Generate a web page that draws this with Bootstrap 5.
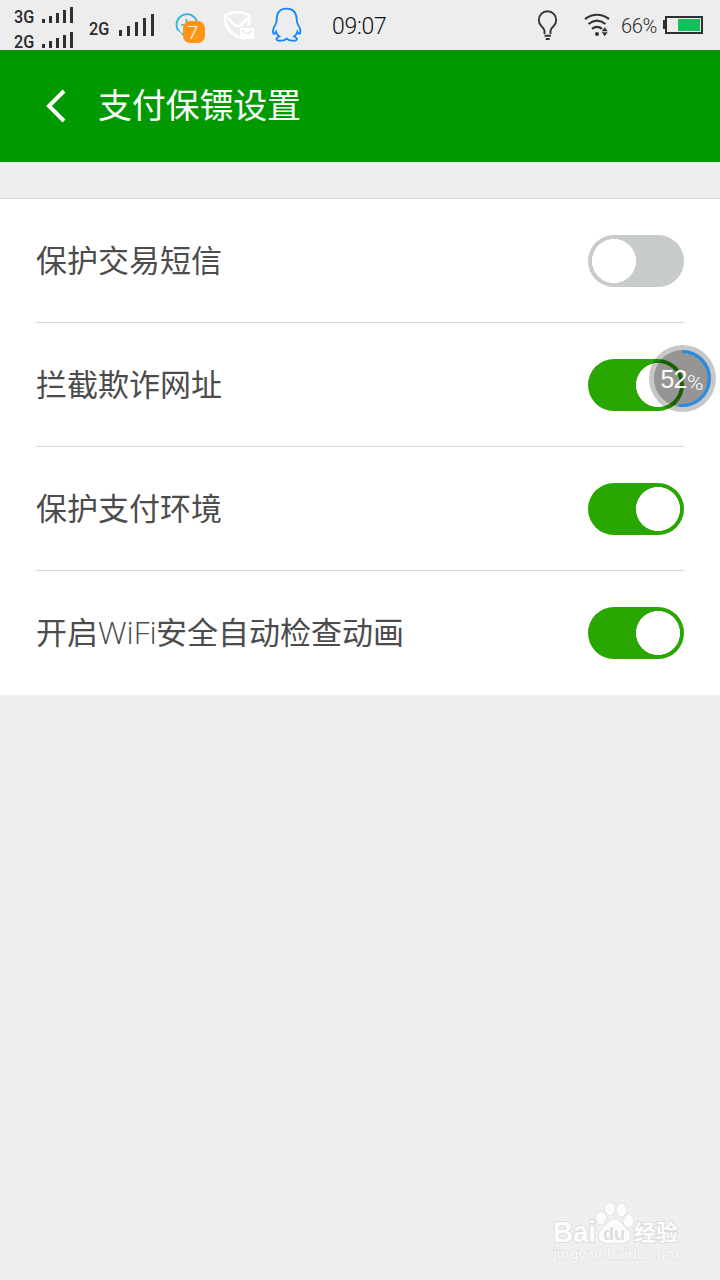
<!DOCTYPE html>
<html lang="zh-CN">
<head>
<meta charset="utf-8">
<meta name="viewport" content="width=device-width, initial-scale=1">
<title>支付保镖设置</title>
<link href="https://cdn.jsdelivr.net/npm/bootstrap@5.3.0/dist/css/bootstrap.min.css" rel="stylesheet">
<style>
body{background:#efefef;font-family:"Liberation Sans","Noto Sans CJK SC",sans-serif;min-height:1280px;overflow:hidden}
svg{display:block;flex:none}
.status{height:50px;background:#ededed;color:#2b2b2b}
.net{font:500 18px/16px Roboto,sans-serif;width:28px;transform:scaleX(.9);transform-origin:0 50%}
.sim{height:25px}
.sim .net{padding-top:9px}
.clock{font:300 23px/50px Roboto,sans-serif;letter-spacing:-.3px;color:#111;width:60px;padding-top:4px}
.pct{font:300 20px/50px Roboto,sans-serif;letter-spacing:-.4px;width:42px;padding-top:1px}
.titlebar{height:112px;background:#009900;padding-left:45px}
.titlebar h1{font:400 34px/50px "Noto Sans CJK SC",sans-serif;letter-spacing:-.2px;margin-left:31px;padding-bottom:4px}
.settings{margin-top:36px;border-top:1px solid #d9d9d9}
.settings .setrow{height:124px;border-bottom:1px solid #d9d9d9}
.settings .setrow:last-child{border-bottom:0}
.setrow label{font:400 31px/46px "Noto Sans CJK SC",sans-serif;color:#4c4c4c;padding-bottom:4px;height:50px}
.latin{display:inline-block;font:300 32px/46px "Open Sans","Noto Sans",sans-serif;width:58px;letter-spacing:-.1px;white-space:nowrap}
.form-switch .form-check-input.toggle{width:96px;height:52px;margin:0;border:0;box-shadow:none;background-color:#c8cbcc;background-size:52px 52px;background-position:left center;background-image:radial-gradient(circle closest-side at center,#fff 21.7px,transparent 22.3px);background-repeat:no-repeat}
.form-switch .form-check-input.toggle:checked{background-color:#29a600;background-position:right center}
.float-ball{position:absolute;left:648px;top:344px}
.watermark{position:absolute;left:545px;top:1196px}
</style>
</head>
<body>
<header class="status d-flex align-items-center">
  <div style="width:89px;padding-left:14px">
    <div class="sim d-flex"><span class="net">3G</span>
      <svg width="32" height="25" fill="#303030"><path d="M0 19h3v4h-3zM7 16h3v7h-3zM14 13h3v10h-3zM21 10h3v13h-3zM28 7h3v16h-3z"/></svg></div>
    <div class="sim d-flex"><span class="net">2G</span>
      <svg width="32" height="25" fill="#303030"><path d="M0 19h3v4h-3zM7 16h3v7h-3zM14 13h3v10h-3zM21 10h3v13h-3zM28 7h3v16h-3z"/></svg></div>
  </div>
  <span class="net pt-2">2G</span>
  <svg width="58" height="50" fill="#303030"><path d="M2 30h3v6h-3zM10 26h3v10h-3zM18 22h3v14h-3zM26 18h3v18h-3zM34 14h3v22h-3z"/></svg>
  <svg width="47" height="50" viewBox="175 0 47 50">
    <circle cx="187" cy="24.700" r="10.500" fill="none" stroke="#32b4dc" stroke-width="1.800"/>
    <path d="M186.500 19v8M181 25h8" stroke="#32b4dc" stroke-width="1.600"/>
    <path d="M176.500 31l5 3.500" stroke="#ededed" stroke-width="2"/>
    <rect x="183" y="21" width="22" height="22" rx="7" fill="#ff9415"/>
    <text x="193" y="38.500" text-anchor="middle" font-family="Roboto,sans-serif" font-weight="300" font-size="19" fill="#fff">7</text>
  </svg>
  <svg width="48" height="50" viewBox="222 0 48 50" fill="none" stroke="#fff" stroke-width="2.600">
    <path d="M239.500 37.500C229 33 223.500 24 225.200 15.800Q226 14.500 229 14Q237.500 10 246 14Q249 14.500 249.500 16Q250 21 248 25.500"/>
    <path d="M227 17.500l8 7.800q2.700 2 5.400 0l8-7.800"/>
    <path d="M240 28h14v11h-14z" fill="#fff" stroke="none"/><path d="M241.500 30.500l5.500 3.500 5.500-3.500" stroke="#ddd" stroke-width="1"/>
  </svg>
  <svg width="62" height="50" viewBox="270 0 62 50">
    <path d="M286.700 8.700C280 8.700 276.700 13 276.700 19.500Q276.700 22 275.500 24.500Q272.500 29 273.100 32.700Q273.800 35.500 276 31.700Q276.800 35 279.300 36.500Q276 38 276.600 39.700Q277.500 41 281 40.700Q285 40.700 286.700 38.700Q288.400 40.700 292.400 40.700Q296 41 296.800 39.700Q297.400 38 294.100 36.500Q296.600 35 297.400 31.700Q299.600 35.500 300.300 32.700Q300.900 29 297.900 24.500Q296.700 22 296.700 19.500C296.700 13 293.400 8.700 286.700 8.700Z" fill="none" stroke="#1788f8" stroke-width="1.800"/>
  </svg>
  <time class="clock">09:07</time>
  <svg class="ms-auto" width="48" height="50" viewBox="536 0 48 50" fill="none" stroke="#333" stroke-width="2">
    <path d="M544.500 34v-3Q544.300 28.500 541.500 26.200A8.700 8.700 0 1 1 553.500 26.200Q550.700 28.500 550.500 31V34" stroke-width="1.900"/><path d="M544.500 35.800h6.500M545.700 39h4"/>
  </svg>
  <svg width="37" height="50" viewBox="584 0 37 50" fill="none" stroke="#333" stroke-width="2.200">
    <path d="M585 19Q597 10.500 609 19M588.500 24Q597 17.300 605.500 24M592 28.800Q597 25 602 28.800"/>
    <circle cx="597" cy="34" r="2" fill="#333" stroke="none"/><path d="M601.700 31.200l3-4 3 4zM601.700 32.300h6l-3 3.900z" fill="#333" stroke="none"/>
  </svg>
  <span class="pct">66%</span>
  <svg width="57" height="50" viewBox="663 0 57 50"><path d="M663 20h3v9h-3z" fill="#303030"/><rect x="666" y="17" width="36" height="16" fill="none" stroke="#303030" stroke-width="2"/><path d="M678 19h22v12h-22z" fill="#0fc25a"/></svg>
</header>

<nav class="titlebar d-flex align-items-center text-white">
  <svg width="22" height="34" fill="none" stroke="#fff" stroke-width="4"><path d="M19 2L4 17 19 32"/></svg>
  <h1 class="mb-0">支付保镖设置</h1>
</nav>

<main class="settings bg-white">
  <div class="px-4">
    <div class="mx-2 px-1">
    <div class="setrow d-flex align-items-center justify-content-between"><label for="s1">保护交易短信</label><div class="form-switch p-0 m-0"><input class="form-check-input toggle float-none d-block" type="checkbox" role="switch" id="s1"></div></div>
    <div class="setrow d-flex align-items-center justify-content-between"><label for="s2">拦截欺诈网址</label><div class="form-switch p-0 m-0"><input class="form-check-input toggle float-none d-block" type="checkbox" role="switch" id="s2" checked></div></div>
    <div class="setrow d-flex align-items-center justify-content-between"><label for="s3">保护支付环境</label><div class="form-switch p-0 m-0"><input class="form-check-input toggle float-none d-block" type="checkbox" role="switch" id="s3" checked></div></div>
    <div class="setrow d-flex align-items-center justify-content-between"><label for="s4">开启<span class="latin">WiFi</span>安全自动检查动画</label><div class="form-switch p-0 m-0"><input class="form-check-input toggle float-none d-block" type="checkbox" role="switch" id="s4" checked></div></div>
    </div>
  </div>
</main>

<svg class="float-ball" width="70" height="70" viewBox="648 344 70 70">
  <circle cx="682.500" cy="378.500" r="33.500" fill="#000" fill-opacity=".22"/>
  <circle cx="682.500" cy="378.500" r="28.500" fill="#000" fill-opacity=".25"/>
  <path d="M682 351.500A27 27 0 1 1 679 405.300" fill="none" stroke="#278be0" stroke-width="3"/>
  <text x="660.500" y="388.300" font-family="Liberation Sans,sans-serif" font-size="25" textLength="27" fill="#fff">52</text>
  <text x="687" y="389.500" font-family="Roboto,sans-serif" font-weight="300" font-size="20" textLength="16.500" lengthAdjust="spacingAndGlyphs" fill="#fff">%</text>
</svg>

<svg class="watermark" width="145" height="74" viewBox="545 1196 145 74" fill="#fcfcfc" stroke="#dcdcdc" stroke-width="1.200" paint-order="stroke">
  <text x="553" y="1242" font-family="Liberation Sans,sans-serif" font-weight="bold" font-size="29" textLength="43" lengthAdjust="spacingAndGlyphs" stroke-width="2">Bai</text>
  <ellipse cx="601" cy="1218" rx="5" ry="6.500"/><ellipse cx="610" cy="1209" rx="5" ry="6.500"/><ellipse cx="621.500" cy="1210" rx="5" ry="6.500"/><ellipse cx="628.500" cy="1221" rx="5" ry="6.500"/>
  <path d="M614.500 1219Q619 1219 623 1225Q631 1232 630 1238Q627 1245 614.500 1242.500Q601 1245 599 1238Q598 1232 606 1225Q610 1219 614.500 1219Z"/>
  <text x="603" y="1240" font-family="Liberation Sans,sans-serif" font-weight="bold" font-size="19" textLength="22" lengthAdjust="spacingAndGlyphs" fill="#dedede" stroke="none">du</text>
  <text x="634" y="1240" font-family="Noto Sans CJK SC,sans-serif" font-weight="bold" font-size="22" textLength="44" stroke-width="2">经验</text>
  <text x="553" y="1259" font-family="Noto Sans,sans-serif" font-size="15" textLength="126" lengthAdjust="spacingAndGlyphs" stroke="#e0e0e0" stroke-width="1.300">jingyan.baidu.com</text>
</svg>
<script src="https://cdn.jsdelivr.net/npm/bootstrap@5.3.0/dist/js/bootstrap.bundle.min.js"></script>
</body>
</html>
